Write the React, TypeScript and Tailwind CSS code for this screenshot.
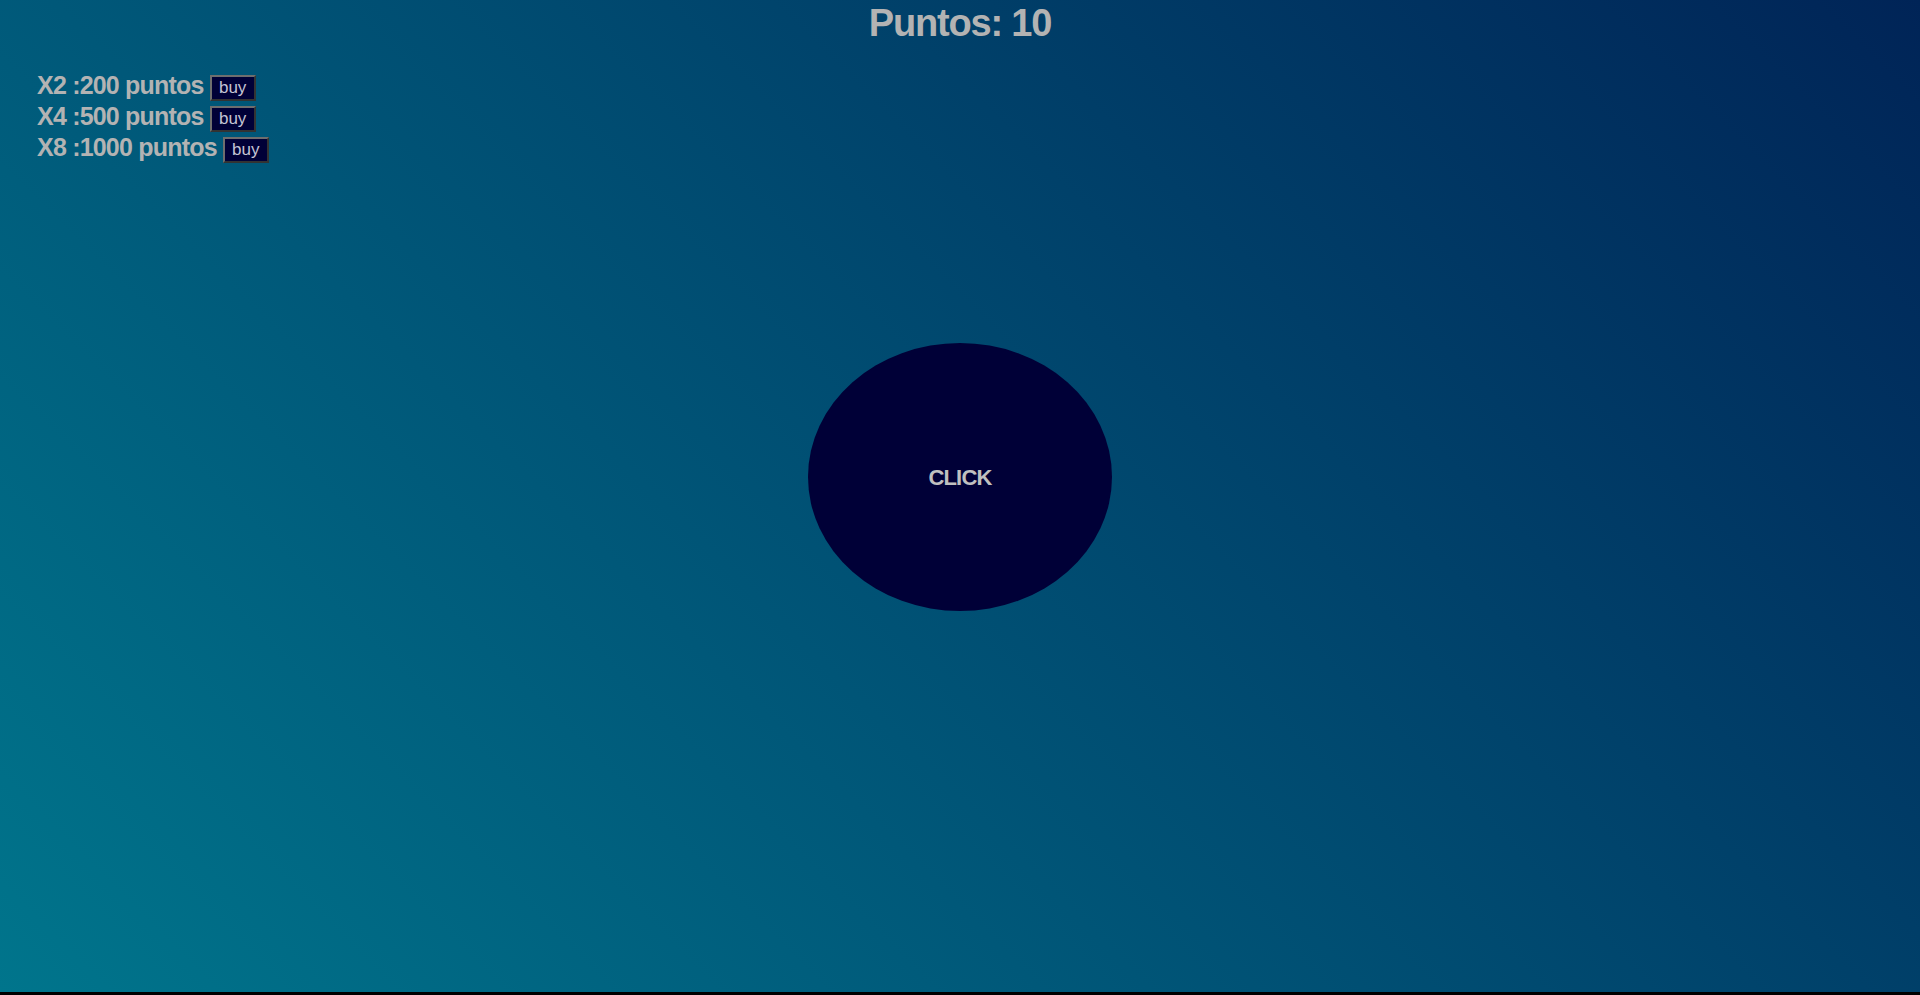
import React, { useState } from 'react';

const UPGRADES = [
  { mult: 2, cost: 200 },
  { mult: 4, cost: 500 },
  { mult: 8, cost: 1000 },
];

export default function App() {
  const [points, setPoints] = useState(10);
  const [factor, setFactor] = useState(1);

  const buy = (mult: number, cost: number) => {
    if (points < cost) return;
    setPoints(points - cost);
    setFactor(mult);
  };

  return (
    <div className="bg-black min-h-[995px]" style={{ fontFamily: '"Liberation Sans", Arial, sans-serif' }}>
      <div className="h-[992px] bg-[linear-gradient(45deg,#00758c,#002457)] overflow-hidden">
        {/* Score */}
        <div className="pt-[4px] text-center text-[38px] leading-[38px] font-bold tracking-[-1.2px] text-[#b3b3b3]">
          Puntos: {points}
        </div>

        {/* Shop */}
        <div className="mt-[28px] pl-[37px]">
          {UPGRADES.map(u => (
            <div key={u.mult} className="flex items-end h-[31px]">
              <span className="text-[25px] leading-[31px] font-bold tracking-[-0.8px] text-[#b3b3b3]">
                X{u.mult} :{u.cost} puntos
              </span>
              <button
                type="button"
                onClick={() => buy(u.mult, u.cost)}
                className="ml-[6px] h-[26px] w-[46px] bg-[#000037] border-2 border-t-[#6e6e6e] border-l-[#6e6e6e] border-b-[#333333] border-r-[#333333] text-[17px] leading-[20px] text-[#c4c4d4]"
              >
                buy
              </button>
            </div>
          ))}
        </div>

        {/* Click target */}
        <button
          type="button"
          onClick={() => setPoints(points + factor)}
          className="mt-[180px] mx-auto flex items-center justify-center w-[304px] h-[268px] rounded-[50%] bg-[#000037] text-[22px] font-bold tracking-[-0.8px] text-[#c0c0c0]"
        >
          CLICK
        </button>
      </div>
    </div>
  );
}
